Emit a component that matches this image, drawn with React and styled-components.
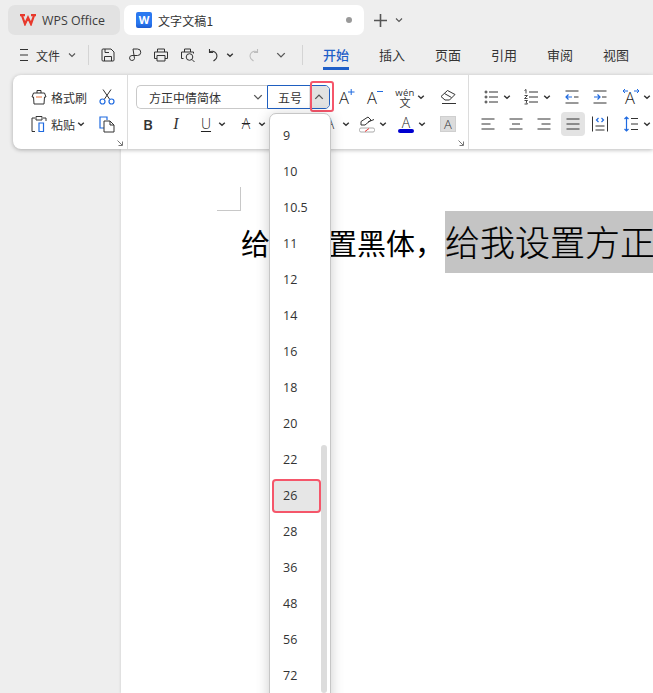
import React from "react";
import styled, { createGlobalStyle } from "styled-components";

const Global = createGlobalStyle`
  html, body { margin: 0; padding: 0; background: #eeeeee; }
  * { box-sizing: border-box; }
`;
const cjk = `"Noto Sans CJK SC", "Noto Sans", sans-serif`;
const latin = `"Open Sans", "Noto Sans CJK SC", sans-serif`;

const Window = styled.div`
  position: relative; width: 653px; height: 693px; overflow: hidden;
  background: #eeeeee; font-family: ${cjk}; color: #333; font-size: 12px;
`;
const TitleBar = styled.div`
  display: flex; align-items: center; height: 30px; margin-top: 0; padding-left: 8px; gap: 4px;
  position: relative; top: 5px;
`;
const AppTab = styled.div`
  display: flex; align-items: center; width: 112px; height: 30px; padding-left: 12px; gap: 6px;
  border-radius: 7px; background: #e2e2e2; font-family: ${latin}; font-size: 12.4px; color: #3c3c3c;
`;
const DocTab = styled.div`
  display: flex; align-items: center; width: 240px; height: 30px; padding: 0 12px; gap: 6px;
  border-radius: 7px; background: #fff; color: #333;
`;
const DocLogo = styled.div`
  width: 16px; height: 16px; border-radius: 2px; background: linear-gradient(#2a78f0 70%, #1c5ad0);
  color: #fff; font: 700 11px/16px ${latin}; text-align: center;
`;
const DocName = styled.span` flex: 1; font-size: 12px; letter-spacing: .1px; `;
const Dot = styled.i` width: 6px; height: 6px; border-radius: 50%; background: #999; `;
const AddButton = styled.div` display: flex; align-items: center; margin-left: 5px; gap: 7px; `;

const MenuBar = styled.div`
  display: flex; align-items: center; height: 30px; margin-top: 10px; padding-left: 19px;
`;
const Slot = styled.div`
  display: flex; align-items: center; justify-content: center; flex: none;
  width: ${p => p.$w || 24}px; margin-left: ${p => p.$ml || 0}px; height: 24px;
  border-radius: 4px; background: ${p => (p.$active ? "#e3e3e3" : "transparent")};
`;
const MenuLabel = styled.span` font-size: 12px; margin: 0 7px 0 0; `;
const VSep = styled.i` width: 1px; height: 20px; background: #d4d4d4; flex: none; margin-left: ${p => p.$ml || 0}px; `;
const Tabs = styled.div` display: flex; gap: 30px; margin-left: 20px; height: 30px; `;
const TabItem = styled.div`
  height: 30px; line-height: 30px; font-size: 13px; white-space: nowrap;
  color: ${p => (p.$on ? "#1f5fc8" : "#333")};
  border-bottom: ${p => (p.$on ? "3px solid #1f5fc8" : "0")};
  font-weight: ${p => (p.$on ? 500 : 400)};
`;

const Ribbon = styled.div`
  display: flex; height: 74px; margin: 5px 0 0 13px; background: #fff;
  border-radius: 8px 0 0 8px; box-shadow: 0 1px 4px rgba(0,0,0,.28); position: relative; z-index: 2;
`;
const Group = styled.div`
  position: relative; width: ${p => p.$w}px; padding: 10px 0 0 ${p => p.$pl}px; flex: none;
  display: flex; flex-direction: column; gap: 3px;
  border-right: ${p => (p.$sep ? "1px solid #dcdcdc" : "0")};
`;
const Row = styled.div` display: flex; align-items: center; height: 24px; `;
const ClipLabel = styled.span` font-size: 12px; flex: none; width: ${p => p.$w}px; `;
const Launcher = styled.div`
  position: absolute; right: 4px; bottom: 3px; width: 6px; height: 6px; display: flex;
`;
const FontBox = styled.div`
  display: flex; align-items: center; justify-content: space-between; width: 131px; height: 24px;
  padding: 0 4px 0 12px; border: 1px solid #c9c9c9; border-right: 0; border-radius: 5px 0 0 5px; font-size: 12px;
`;
const SizeBox = styled.div`
  display: flex; align-items: center; width: 63px; height: 24px; padding-left: 10px;
  border: 1px solid #1f5fc0; border-radius: 0 5px 5px 0; font-size: 12px; position: relative;
`;
const SizeToggle = styled.div`
  position: absolute; right: 0; top: 0; width: 20px; height: 22px; background: #e2e2e2;
  display: flex; align-items: center; justify-content: center; border-radius: 0 4px 4px 0;
`;
const RedMark = styled.div`
  position: absolute; right: -5px; top: -5px; width: 24px; height: 31px;
  border: 2px solid #f5566a; border-radius: 3px; z-index: 5;
`;
const Wen = styled.div`
  display: flex; flex-direction: column; align-items: center; line-height: 1; color: #333;
`;
const WenTop = styled.span` font: 9.5px/9px ${latin}; letter-spacing: .3px; `;
const WenBottom = styled.span` font: 11px/10px ${cjk}; `;
const Shaded = styled.div`
  width: 16px; height: 16px; background: #dcdcdc; border: 1px solid #cfcfcf;
  font: 300 13px/14px ${latin}; text-align: center; color: #333;
`;
const ColorA = styled.div`
  display: flex; flex-direction: column; align-items: center; width: 16px; font: 300 14px/13px ${latin}; color: #222;
`;
const ColorBar = styled.i` width: 16px; height: 4px; background: #0000d0; border-radius: 2px; `;
const BoldGlyph = styled.span` font: 600 15px/1 ${latin}; color: #333; `;
const ItalicGlyph = styled.span` font: italic 400 16px/1 "Liberation Serif", serif; color: #333; `;
const UnderGlyph = styled.span`
  font: 300 14px/1 ${latin}; color: #222; text-decoration: underline; text-underline-offset: 2px;
`;
const StrikeGlyph = styled.span` font: 300 14px/1 ${latin}; color: #222; text-decoration: line-through; `;
const PlainGlyph = styled.span` font: 300 14px/1 ${latin}; color: #222; `;

const Page = styled.div`
  margin-left: 121px; height: 544px; background: #fff; padding-top: 38px; overflow: hidden;
  box-shadow: -1px 0 2px rgba(0,0,0,.08);
`;
const Corner = styled.div`
  width: 24px; height: 24px; margin-left: 96px; border-right: 1px solid #c8c8c8; border-bottom: 1px solid #c8c8c8;
`;
const TextLine = styled.div`
  display: flex; align-items: center; height: 62px; margin-left: 120px; white-space: nowrap; color: #000;
`;
const BlackText = styled.span` width: 204px; flex: none; font: 400 29px/62px ${cjk}; `;
const SelectedText = styled.span`
  flex: none; height: 62px; background: #c4c4c4; color: #000; font: 300 35px/60px ${cjk};
  -webkit-text-stroke: .2px #000;
`;

const Dropdown = styled.div`
  position: absolute; left: 269px; top: 113px; width: 62px; height: 600px; padding-top: 4px;
  background: #fff; border: 1px solid #c6c6c6; border-radius: 7px 7px 0 0; z-index: 10;
  box-shadow: 0 2px 14px rgba(0,0,0,.2);
`;
const Option = styled.div`
  height: 36px; display: flex; align-items: center; padding-left: 13px;
  font: 12.5px/1 ${latin}; color: #333; position: relative;
`;
const Current = styled.div`
  position: absolute; left: 4px; top: 3px; width: 45px; height: 30px; border-radius: 2px;
  background: #e6e6e6; box-shadow: 0 0 0 2px #f5566a; z-index: -1;
`;
const Thumb = styled.div`
  position: absolute; left: 51px; top: 331px; width: 6px; height: 248px; background: #dcdcdc; border-radius: 3px;
`;

const Svg = ({ size = 16, children, stroke = "#333", sw = 1 }) => (
  <svg width={size} height={size} viewBox={`0 0 ${size} ${size}`} fill="none" stroke={stroke} strokeWidth={sw}>{children}</svg>
);
const Chev = ({ up, size = 8, color = "#555" }) => (
  <svg width={size} height={size} viewBox="0 0 8 8" fill="none" stroke={color} strokeWidth="1.1">
    <path d={up ? "M1 5.5 4 2.5l3 3" : "M1 2.5l3 3 3-3"} />
  </svg>
);
const Caret = ({ w = 12 }) => (
  <Slot $w={w}><svg width="8" height="8" viewBox="0 0 8 8" fill="none" stroke="#333" strokeWidth="1.4" style={{ marginRight: w - 8 }}><path d="M1.2 2.7 4 5.3l2.8-2.6" /></svg></Slot>
);
const blue = "#1f6ae0";
const glyphProps = { fill: "#222", stroke: "none", fontFamily: "Open Sans", fontWeight: 300 };
const I = {
  save: <Svg><path d="M2 3a1 1 0 0 1 1-1h8l3 3v8a1 1 0 0 1-1 1H3a1 1 0 0 1-1-1z" /><path d="M5 2v3.500h4M4.500 14V9.500h7V14" /></Svg>,
  share: <Svg><path d="M6 2h4.500a3.200 3.200 0 0 1 0 6.500H5a2.500 2.500 0 1 0 2.500 3L6 2" /></Svg>,
  print: <Svg><path d="M4.500 5V2h7v3M4 11.500H1.500V5h13v6.500H12" /><path d="M4 8.500h8V14H4z" /></Svg>,
  preview: <Svg><path d="M4.500 5V2h6v3M3.500 11.500h-2V5h12v1.500" /><circle cx="9.500" cy="10" r="3.300" /><path d="m12 12.500 2.500 2.500" /></Svg>,
  undo: <Svg sw={1.1}><path d="M3.500 2v3.500H7" /><path d="M3.500 5.200A4.400 4.400 0 1 1 9 12.800L7.500 14" /></Svg>,
  redo: <Svg stroke="#bdbdbd" sw={1.1}><path d="M12.500 2v3.500H9" /><path d="M12.500 5.200A4.400 4.400 0 1 0 7 12.800L8.500 14" /></Svg>,
  brush: <Svg size={18}><path d="M7 5V2.500h4V5M2 9l1.500-4h11L16 9h-1.500l-.5 7H4l-.5-7z" /><path d="M6 9h6" stroke="#e8703a" /></Svg>,
  cut: <Svg size={18}><path d="M5 1.500 11.500 11M13 1.500 6.500 11" /><circle cx="4.500" cy="13.500" r="2.500" stroke={blue} strokeWidth={1.2} /><circle cx="13.500" cy="13.500" r="2.500" stroke={blue} strokeWidth={1.2} /></Svg>,
  paste: <Svg size={18}><path d="M5 3H2v13.500h3M13 3h3v3" /><path d="M6 1.500h6V5H6z" /><path d="M9 8h4.500v8.500H9z" stroke={blue} strokeWidth={1.2} /></Svg>,
  copy: <Svg size={18}><path d="M6 13H2V2h7v3" stroke={blue} strokeWidth={1.2} /><path d="M6 6h6l4 4v7H6z" /><path d="M12 6v4h4" /></Svg>,
  eraser: <Svg size={18}><path d="m2 8.500 6.500-6 7.500 4-5.500 5.500H6z" /><path d="m5.500 5.500 7 4" /><path d="M3 15.500h14" /></Svg>,
  hl: <Svg size={20}><path d="M4 11V7.500L11 3l3 3-6 5zM11 8l6-2.500" /><rect x="2.500" y="14" width="15" height="4" rx="1.500" stroke="#aaa" /><path d="m8 17.500 4-3" stroke="#e33" /></Svg>,
  bullets: <Svg size={18}><circle cx="4" cy="4" r="1" /><circle cx="4" cy="9" r="1" /><circle cx="4" cy="14" r="1" /><path d="M7 4h9M7 9h9M7 14h9" /></Svg>,
  numbers: <Svg size={18}><path d="M2.500 2.500 4 1.500v4M2.500 7.500h3l-3 3h3M2.500 12.500h3L4 14l1.500 2h-3" strokeWidth={.9} /><path d="M7 4h9M7 9h9M7 14h9" /></Svg>,
  indDec: <Svg size={18}><path d="M2.500 3h13M11 9h4.500M2.500 15h13" /><path d="M9 9H3M5.500 6.500 3 9l2.500 2.500" stroke={blue} strokeWidth={1.2} /></Svg>,
  indInc: <Svg size={18}><path d="M2.500 3h13M11 9h4.500M2.500 15h13" /><path d="M3 9h6M6.500 6.500 9 9l-2.500 2.500" stroke={blue} strokeWidth={1.2} /></Svg>,
  alignL: <Svg size={18}><path d="M2.500 4h13M2.500 9h9M2.500 14h13" /></Svg>,
  alignC: <Svg size={18}><path d="M2.500 4h13M5 9h8M2.500 14h13" /></Svg>,
  alignR: <Svg size={18}><path d="M2.500 4h13M6.500 9h9M2.500 14h13" /></Svg>,
  justify: <Svg size={18}><path d="M2.500 4h13M2.500 9h13M2.500 14h13" /></Svg>,
  dist: <Svg size={18}><path d="M1.500 1.500v15M16.500 1.500v15M4.500 11h9M4.500 15h9" /><path d="M7.500 3 5.500 5l2 2M10.500 3l2 2-2 2" stroke={blue} strokeWidth={1.2} /></Svg>,
  lineSp: <Svg size={18}><path d="M9 3.500h7M9 9h7M9 14.500h7" /><path d="M4.500 2v14M2.500 4l2-2 2 2M2.500 14l2 2 2-2" stroke={blue} strokeWidth={1.2} /></Svg>,
  lines: <svg width="8" height="12" viewBox="0 0 8 12" fill="none" stroke="#333"><path d="M0 .5h8M0 6h8M0 11.500h8" /></svg>,
  launcher: <svg width="6" height="6" viewBox="0 0 6 6" fill="none" stroke="#777"><path d="M.5.5 5 5M5.500 1.500v4h-4" /></svg>,
  aPlus: <svg width="22" height="24" viewBox="0 0 22 24" fill="none"><text x="2" y="19" fontSize="16.5" {...glyphProps}>A</text><path d="M11 7h6.500M14.200 4v6" stroke={blue} /></svg>,
  aMinus: <svg width="22" height="24" viewBox="0 0 22 24" fill="none"><text x="2" y="19" fontSize="16.5" {...glyphProps}>A</text><path d="M12 6.500h6" stroke={blue} /></svg>,
  dirA: <svg width="20" height="24" viewBox="0 0 20 24" fill="none"><text x="4" y="19" fontSize="16.5" {...glyphProps}>A</text><path d="M2 6h5M4 4 2 6l2 2M13 6h5M16 4l2 2-2 2" stroke={blue} /></svg>,
};
const sizes = ["9","10","10.5","11","12","14","16","18","20","22","26","28","36","48","56","72"];

export default function App() {
  return (
    <Window>
      <Global />
      <TitleBar>
        <AppTab>
          <svg width="16" height="12" viewBox="0 0 16 12" fill="none" stroke="#e8392c" strokeWidth="2.2"><path d="M0 1.200h5M11 1.200h5M1.800 1 5 10l3-6.500L11 10l3.200-9" /></svg>
          WPS Office
        </AppTab>
        <DocTab><DocLogo>W</DocLogo><DocName>文字文稿1</DocName><Dot /></DocTab>
        <AddButton>
          <Svg size={15} stroke="#555" sw={1.6}><path d="M7.500 1v13M1 7.500h13" /></Svg>
          <Chev />
        </AddButton>
      </TitleBar>
      <MenuBar>
        <Slot $w={9}>{I.lines}</Slot>
        <Slot $w={8} />
        <MenuLabel>文件</MenuLabel>
        <Slot $w={10}><Chev /></Slot>
        <VSep $ml={11} />
        <Slot $ml={7}>{I.save}</Slot>
        <Slot $ml={3}>{I.share}</Slot>
        <Slot $ml={2}>{I.print}</Slot>
        <Slot $ml={3}>{I.preview}</Slot>
        <Slot $ml={2}>{I.undo}</Slot>
        <Caret w={12} />
        <Slot $ml={3}>{I.redo}</Slot>
        <Slot $ml={4}><Chev size={10} /></Slot>
        <VSep $ml={9} />
        <Tabs>
          <TabItem $on>开始</TabItem>
          {["插入","页面","引用","审阅","视图"].map(t => <TabItem key={t}>{t}</TabItem>)}
        </Tabs>
      </MenuBar>
      <Ribbon>
        <Group $w={115} $pl={17} $sep>
          <Row>
            <Slot $w={18}>{I.brush}</Slot>
            <Slot $w={3} />
            <ClipLabel $w={47}>格式刷</ClipLabel>
            <Slot $w={18}>{I.cut}</Slot>
          </Row>
          <Row>
            <Slot $w={18}>{I.paste}</Slot>
            <Slot $w={3} />
            <ClipLabel $w={26}>粘贴</ClipLabel>
            <Caret w={12} />
            <Slot $w={18} $ml={9}>{I.copy}</Slot>
          </Row>
          <Launcher>{I.launcher}</Launcher>
        </Group>
        <Group $w={341} $pl={8} $sep>
          <Row>
            <FontBox>方正中倩简体<Chev size={10} /></FontBox>
            <SizeBox>五号<SizeToggle><Chev up size={10} /></SizeToggle><RedMark /></SizeBox>
            <Slot $ml={6}>{I.aPlus}</Slot>
            <Slot $ml={4}>{I.aMinus}</Slot>
            <Slot $ml={5}><Wen><WenTop>wén</WenTop><WenBottom>文</WenBottom></Wen></Slot>
            <Caret />
            <Slot $ml={7}>{I.eraser}</Slot>
          </Row>
          <Row>
            <Slot><BoldGlyph>B</BoldGlyph></Slot>
            <Slot $ml={4}><ItalicGlyph>I</ItalicGlyph></Slot>
            <Slot $ml={6}><UnderGlyph>U</UnderGlyph></Slot><Caret />
            <Slot $ml={4}><StrikeGlyph>A</StrikeGlyph></Slot><Caret />
            <Slot $ml={48}><PlainGlyph>A</PlainGlyph></Slot><Caret />
            <Slot $ml={1}>{I.hl}</Slot><Caret />
            <Slot $ml={3}><ColorA>A<ColorBar /></ColorA></Slot><Caret />
            <Slot $ml={6}><Shaded>A</Shaded></Slot>
          </Row>
          <Launcher>{I.launcher}</Launcher>
        </Group>
        <Group $w={184} $pl={7}>
          <Row>
            <Slot $ml={3}>{I.bullets}</Slot><Caret />
            <Slot $ml={4}>{I.numbers}</Slot><Caret />
            <Slot $ml={5}>{I.indDec}</Slot>
            <Slot $ml={4}>{I.indInc}</Slot>
            <Slot $ml={7}>{I.dirA}</Slot><Caret />
          </Row>
          <Row>
            <Slot>{I.alignL}</Slot>
            <Slot $ml={4}>{I.alignC}</Slot>
            <Slot $ml={4}>{I.alignR}</Slot>
            <Slot $ml={5} $active>{I.justify}</Slot>
            <Slot $ml={3}>{I.dist}</Slot>
            <Slot $ml={7}>{I.lineSp}</Slot><Caret />
          </Row>
        </Group>
      </Ribbon>
      <Page>
        <Corner />
        <TextLine>
          <BlackText>给我设置黑体，</BlackText>
          <SelectedText>给我设置方正中倩简体</SelectedText>
        </TextLine>
      </Page>
      <Dropdown>
        {sizes.map(s => (
          <Option key={s}>{s === "26" && <Current />}{s}</Option>
        ))}
        <Thumb />
      </Dropdown>
    </Window>
  );
}
